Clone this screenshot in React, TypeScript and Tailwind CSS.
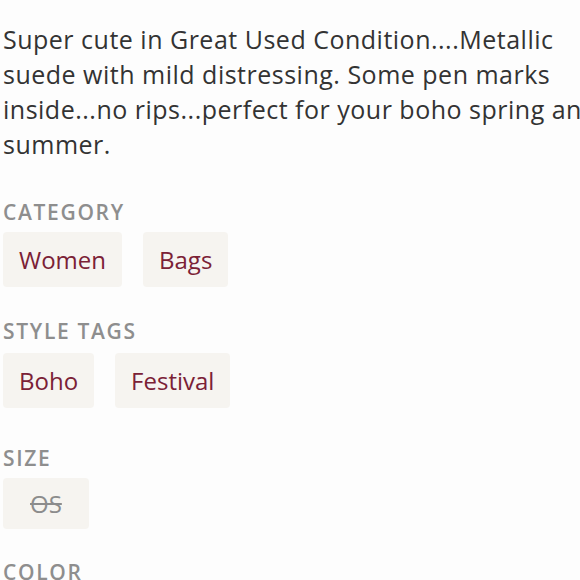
import React from "react";

const Pill = ({ children, muted, h }: { children: React.ReactNode; muted?: boolean; h?: string }) => (
  <div
    className={`flex ${h ?? "h-[55px]"} items-center rounded-[4px] bg-[#f6f4f0] px-[16px] text-[24px] ${
      muted ? "text-[#8c8c8c] line-through" : "text-[#7b2136]"
    }`}
  >
    {children}
  </div>
);

const Label = ({ children }: { children: React.ReactNode }) => (
  <div className="text-[21px] font-semibold leading-[24px] tracking-[0.08em] text-[#8e8e8e]">{children}</div>
);

export default function App() {
  return (
    <div
      className="h-[580px] w-[580px] overflow-hidden bg-[#fdfdfd]"
      style={{ fontFamily: "'Open Sans', 'Noto Sans', sans-serif" }}
    >
      <div className="w-[612px] pl-[3px] pt-[22px]">
        <p className="text-[25px] leading-[35px] tracking-[0.02em] text-[#333333]">
          Super cute in Great Used Condition....Metallic suede with mild distressing. Some pen marks
          inside...no rips...perfect for your boho spring and summer.
        </p>
        <div className="mt-[38px]">
          <Label>CATEGORY</Label>
          <div className="mt-[8px] flex gap-[21px]">
            <Pill>Women</Pill>
            <Pill>Bags</Pill>
          </div>
        </div>
        <div className="mt-[32px]">
          <Label>STYLE TAGS</Label>
          <div className="mt-[10px] flex gap-[21px]">
            <Pill>Boho</Pill>
            <Pill>Festival</Pill>
          </div>
        </div>
        <div className="mt-[38px]">
          <Label>SIZE</Label>
          <div className="mt-[8px] flex">
            <Pill muted h="h-[51px]">
              <span className="px-[11px]">OS</span>
            </Pill>
          </div>
        </div>
        <div className="mt-[31px]">
          <Label>COLOR</Label>
        </div>
      </div>
    </div>
  );
}
